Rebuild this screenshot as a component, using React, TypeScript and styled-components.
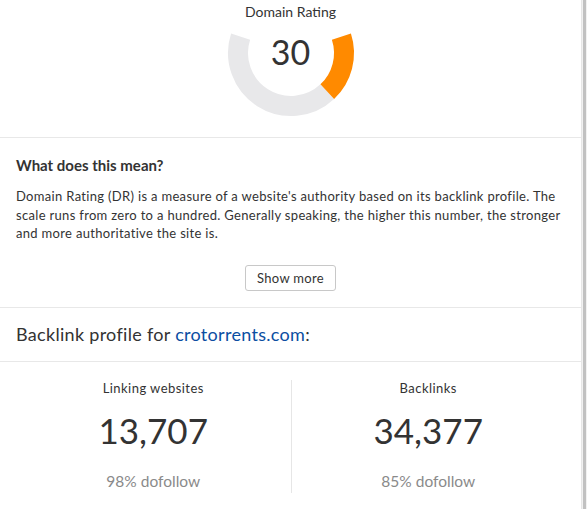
import React from "react";
import styled, { createGlobalStyle } from "styled-components";

const GlobalStyle = createGlobalStyle`
  html, body {
    margin: 0;
    padding: 0;
    background: #ffffff;
  }
  body {
    font-family: Lato, "Open Sans", "Liberation Sans", sans-serif;
    color: #333333;
  }
`;

const Page = styled.div`
  display: flex;
  width: 587px;
  height: 509px;
  overflow: hidden;
`;

const Panel = styled.main`
  width: 581px;
  flex: none;
  border-right: 1px solid #e6e6e6;
  background: #fff;
`;

const Track = styled.div`
  flex: 1;
  display: flex;
  background: #f1f1f1;
  padding-left: 1px;
`;

const Thumb = styled.div`
  width: 3px;
  background: #c1c1c1;
`;

const Section = styled.section<{ $pad?: string }>`
  padding: ${(p) => p.$pad || "0 16px"};
  border-bottom: 1px solid #e8e8e8;
`;

const GaugeWrap = styled.div`
  position: relative;
  width: 140px;
  height: 137px;
  margin: 0 auto;
`;

const GaugeLabel = styled.div`
  position: absolute;
  top: 3px;
  left: 0;
  right: 0;
  text-align: center;
  font-size: 14px;
  color: #333;
`;

const GaugeValue = styled.div`
  position: absolute;
  top: 31px;
  left: 0;
  right: 0;
  text-align: center;
  font-size: 34px;
  color: #333;
`;

const Heading = styled.h3`
  margin: 0;
  padding-top: 18px;
  font-size: 15px;
  font-weight: 700;
  color: #333;
`;

const Para = styled.p`
  margin: 13px 0 0;
  font-size: 13px;
  line-height: 18.5px;
  letter-spacing: 0.32px;
  color: #333;
`;

const ButtonRow = styled.div`
  display: flex;
  justify-content: center;
  padding: 22px 0 16px;
`;

const Button = styled.button`
  font-family: inherit;
  font-size: 13px;
  letter-spacing: 0.3px;
  color: #333;
  background: #fff;
  border: 1px solid #c8c8c8;
  border-radius: 3px;
  height: 26px;
  padding: 0 11px;
  margin-left: 0;
`;

const Title = styled.h2`
  margin: 0;
  padding: 14px 0 15px;
  font-size: 18px;
  font-weight: 400;
  letter-spacing: 0.3px;
  color: #333;
  line-height: 24px;
`;

const Domain = styled.a`
  color: #0b4ea2;
  text-decoration: none;
`;

const Stats = styled.div`
  display: grid;
  grid-template-columns: 1fr 1fr;
  padding: 18px 16px 0;
`;

const Stat = styled.div<{ $divider?: boolean }>`
  display: flex;
  flex-direction: column;
  align-items: center;
  border-left: ${(p) => (p.$divider ? "1px solid #e6e6e6" : "none")};
  height: 113px;
`;

const StatLabel = styled.div`
  font-size: 13px;
  letter-spacing: 0.45px;
  color: #333;
`;

const StatNumber = styled.div`
  font-size: 35px;
  color: #333;
  margin-top: 13px;
  line-height: 42px;
`;

const StatSub = styled.div`
  font-size: 15.5px;
  color: #8a8a8a;
  margin-top: 21px;
`;

function Gauge({ value }: { value: number }) {
  const cx = 70;
  const cy = 53;
  const r = 53;
  const start = 72;
  const span = 216;
  const pt = (deg: number) => {
    const a = (deg * Math.PI) / 180;
    return [cx + r * Math.sin(a), cy - r * Math.cos(a)];
  };
  const arc = (a0: number, a1: number) => {
    const [x0, y0] = pt(a0);
    const [x1, y1] = pt(a1);
    const large = a1 - a0 > 180 ? 1 : 0;
    return `M ${x0} ${y0} A ${r} ${r} 0 ${large} 1 ${x1} ${y1}`;
  };
  const mid = start + (span * value) / 100;
  return (
    <GaugeWrap>
      <svg width="140" height="137" viewBox="0 0 140 137">
        <path d={arc(mid, start + span)} stroke="#e8e8ea" strokeWidth="20" fill="none" />
        <path d={arc(start, mid)} stroke="#ff8a00" strokeWidth="20" fill="none" />
      </svg>
      <GaugeLabel>Domain Rating</GaugeLabel>
      <GaugeValue>{value}</GaugeValue>
    </GaugeWrap>
  );
}

export default function App() {
  return (
    <Page>
      <GlobalStyle />
      <Panel>
        <Section $pad="0">
          <Gauge value={30} />
        </Section>
        <Section>
          <Heading>What does this mean?</Heading>
          <Para>
            Domain Rating (DR) is a measure of a website's authority based on its backlink profile. The
            scale runs from zero to a hundred. Generally speaking, the higher this number, the stronger
            and more authoritative the site is.
          </Para>
          <ButtonRow>
            <Button>Show more</Button>
          </ButtonRow>
        </Section>
        <Section>
          <Title>
            Backlink profile for <Domain href="#">crotorrents.com</Domain>:
          </Title>
        </Section>
        <Stats>
          <Stat>
            <StatLabel>Linking websites</StatLabel>
            <StatNumber>13,707</StatNumber>
            <StatSub>98% dofollow</StatSub>
          </Stat>
          <Stat $divider>
            <StatLabel>Backlinks</StatLabel>
            <StatNumber>34,377</StatNumber>
            <StatSub>85% dofollow</StatSub>
          </Stat>
        </Stats>
      </Panel>
      <Track>
        <Thumb />
      </Track>
    </Page>
  );
}
